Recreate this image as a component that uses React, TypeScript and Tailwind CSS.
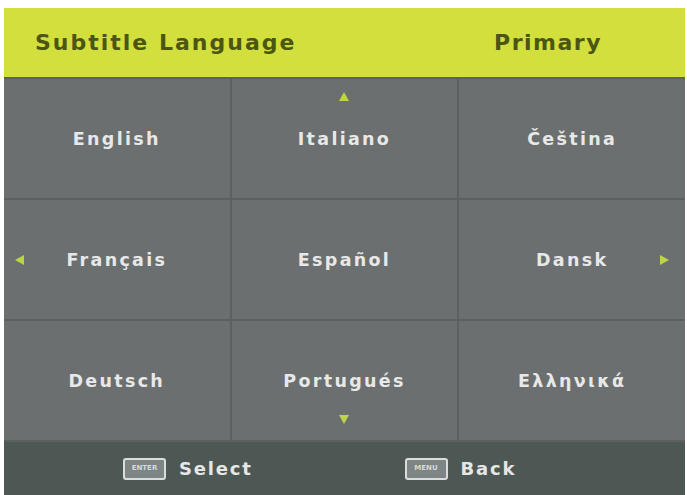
const languages = [
  "English",
  "Italiano",
  "Čeština",
  "Français",
  "Español",
  "Dansk",
  "Deutsch",
  "Portugués",
  "Ελληνικά",
];

const font = { fontFamily: '"DejaVu Sans", Verdana, sans-serif' };

export default function App() {
  return (
    <div className="h-[495px] w-[687px] overflow-hidden bg-white pt-[8px] pl-[4px] pr-[2px]" style={font}>
      <div className="flex h-full flex-col">
        {/* HEADER */}
        <div className="flex h-[69px] shrink-0 items-center bg-[#d3df3c] pl-[31px] pr-[83px]">
          <div className="flex-1 text-[22px] font-bold tracking-[2px] text-[#4b5612]">Subtitle Language</div>
          <div className="text-[22px] font-bold tracking-[1.5px] text-[#4b5612]">Primary</div>
        </div>

        {/* LANGUAGE GRID */}
        <div className="grid flex-1 grid-cols-3 grid-rows-3 gap-[2px] bg-[#5c6060] pt-[2px] pb-[2px]">
          {languages.map((lang, i) => (
            <div key={lang} className="relative flex items-center justify-center bg-[#6b6f6f] pt-[1px]">
              <span className="text-[17.5px] font-bold tracking-[2.3px] text-[#e8e8e8]">{lang}</span>
              {i === 1 && <Arrow dir="up" className="absolute left-1/2 top-[12px] -translate-x-1/2" />}
              {i === 7 && <Arrow dir="down" className="absolute bottom-[14px] left-1/2 -translate-x-1/2" />}
              {i === 3 && <Arrow dir="left" className="absolute left-[10px] top-1/2 -translate-y-1/2" />}
              {i === 5 && <Arrow dir="right" className="absolute right-[14px] top-1/2 -translate-y-1/2" />}
            </div>
          ))}
        </div>

        {/* FOOTER */}
        <div className="flex h-[53px] shrink-0 items-center bg-[#4d5754]">
          <div className="flex w-1/2 items-center pl-[119px]">
            <KeyCap label="ENTER" />
            <span className="ml-[13px] text-[18px] font-bold tracking-[1.8px] text-[#e6e6e6]">Select</span>
          </div>
          <div className="flex w-1/2 items-center pl-[60px]">
            <KeyCap label="MENU" />
            <span className="ml-[13px] text-[18px] font-bold tracking-[1.8px] text-[#e6e6e6]">Back</span>
          </div>
        </div>
      </div>
    </div>
  );
}

function KeyCap({ label }: { label: string }) {
  return (
    <span className="flex h-[22px] w-[43px] items-center justify-center rounded-[3px] border-2 border-[#dcdcdc] bg-[#7d8685] text-[7px] font-bold leading-none text-[#d8d8d8]">
      {label}
    </span>
  );
}

function Arrow({ dir, className }: { dir: "up" | "down" | "left" | "right"; className?: string }) {
  const points = {
    up: "6,1 11,10 1,10",
    down: "1,1 11,1 6,10",
    left: "10,1 10,11 1,6",
    right: "1,1 1,11 10,6",
  }[dir];
  return (
    <svg width="12" height="12" viewBox="0 0 12 12" className={className}>
      <polygon points={points} fill="#bcd445" />
    </svg>
  );
}
